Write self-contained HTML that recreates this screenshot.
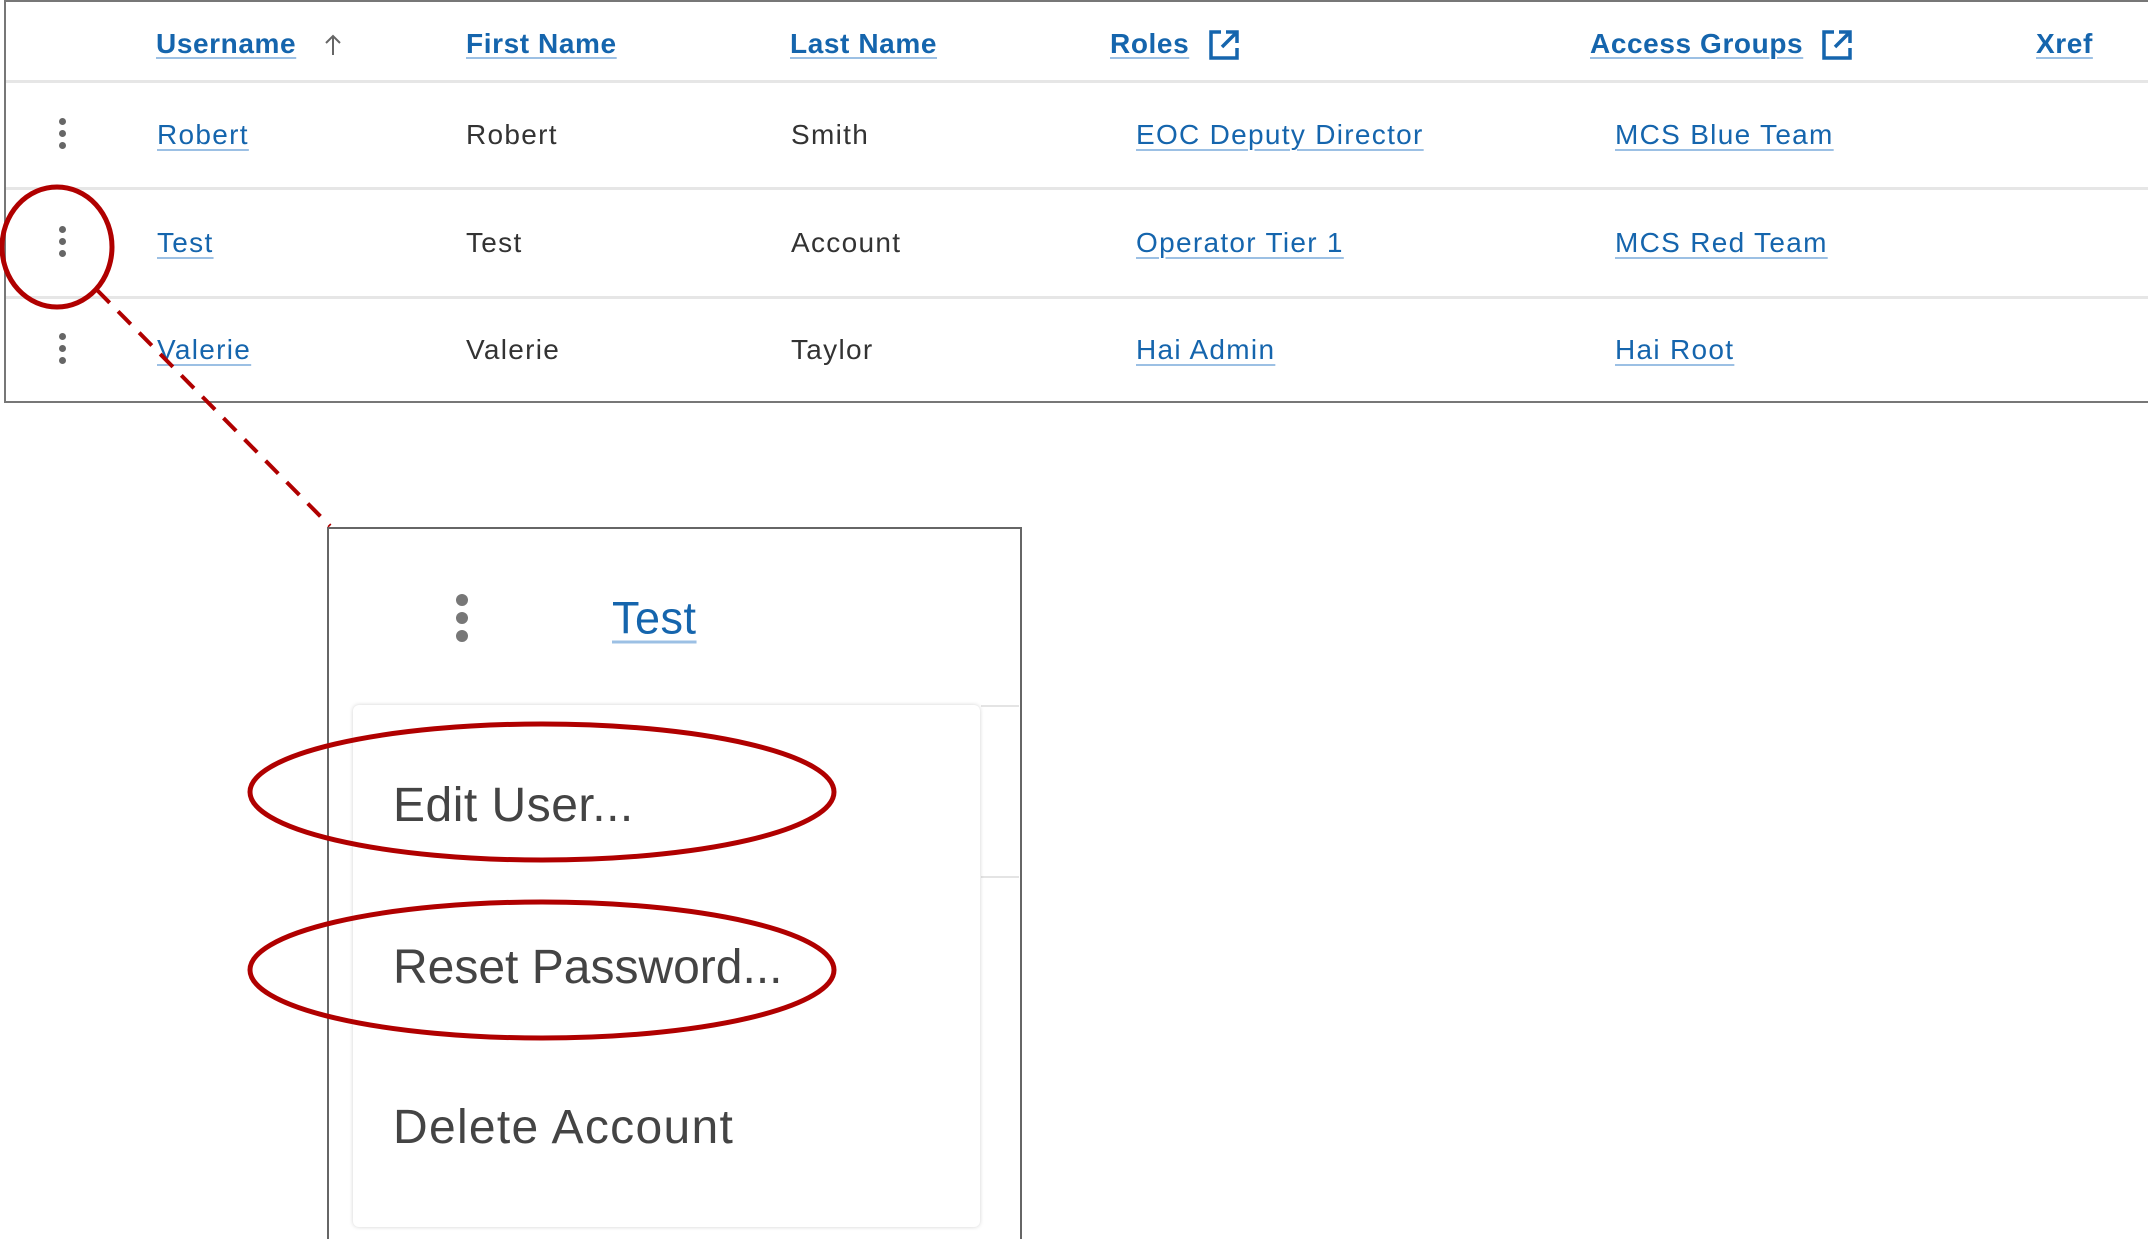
<!DOCTYPE html>
<html><head><meta charset="utf-8"><style>
body{margin:0;width:2148px;height:1231px;background:#fff;position:relative;overflow:hidden;font-family:"Liberation Sans",sans-serif;}
.a{position:absolute;white-space:nowrap;line-height:1;}
.h{font-weight:bold;color:#1565ad;font-size:28px;letter-spacing:.6px;text-decoration:underline;text-decoration-color:#9cc0e4;text-underline-offset:4px;text-decoration-thickness:2px;transform:translateY(-50%);}
.l{color:#1565ad;font-size:28px;letter-spacing:1.3px;text-decoration:underline;text-decoration-color:#9cc0e4;text-underline-offset:5px;text-decoration-thickness:2px;transform:translateY(-50%);}
.t{color:#333;font-size:28px;letter-spacing:1.3px;transform:translateY(-50%);}
.k{position:absolute;width:7px;}
.k i{display:block;width:7px;height:7px;border-radius:50%;background:#666;margin-bottom:5px;}
.m{color:#444;font-size:48px;transform:translateY(-50%);letter-spacing:.5px;}
</style></head><body>
<div style="position:absolute;left:4px;top:0;width:2142px;height:399px;border:2px solid #777;border-right:none;"></div>
<div style="position:absolute;left:6px;top:80px;width:2142px;height:3px;background:#e6e6e6"></div>
<div style="position:absolute;left:6px;top:187px;width:2142px;height:3px;background:#e6e6e6"></div>
<div style="position:absolute;left:6px;top:296px;width:2142px;height:3px;background:#e6e6e6"></div>

<div class="a h" style="left:156px;top:44px">Username</div>
<svg class="a" style="left:323px;top:33px" width="20" height="24" viewBox="0 0 20 24"><path d="M10 22V3M3 10l7-7 7 7" fill="none" stroke="#666" stroke-width="2"/></svg>
<div class="a h" style="left:466px;top:44px">First Name</div>
<div class="a h" style="left:790px;top:44px">Last Name</div>
<div class="a h" style="left:1110px;top:44px">Roles</div>
<svg class="a" style="left:1208px;top:29px" width="32" height="32" viewBox="0 0 32 32"><path d="M13 3H3v26h26V19M18 3h11v11M29 3L14 18" fill="none" stroke="#1565ad" stroke-width="3.5"/></svg>
<div class="a h" style="left:1590px;top:44px">Access Groups</div>
<svg class="a" style="left:1821px;top:29px" width="32" height="32" viewBox="0 0 32 32"><path d="M13 3H3v26h26V19M18 3h11v11M29 3L14 18" fill="none" stroke="#1565ad" stroke-width="3.5"/></svg>
<div class="a h" style="left:2036px;top:44px">Xref</div>

<div class="k" style="left:59px;top:118px"><i></i><i></i><i></i></div>
<div class="a l" style="left:157px;top:135px">Robert</div>
<div class="a t" style="left:466px;top:135px">Robert</div>
<div class="a t" style="left:791px;top:135px">Smith</div>
<div class="a l" style="left:1136px;top:135px">EOC Deputy Director</div>
<div class="a l" style="left:1615px;top:135px">MCS Blue Team</div>

<div class="k" style="left:59px;top:226px"><i></i><i></i><i></i></div>
<div class="a l" style="left:157px;top:243px">Test</div>
<div class="a t" style="left:466px;top:243px">Test</div>
<div class="a t" style="left:791px;top:243px">Account</div>
<div class="a l" style="left:1136px;top:243px">Operator Tier 1</div>
<div class="a l" style="left:1615px;top:243px">MCS Red Team</div>

<div class="k" style="left:59px;top:333px"><i></i><i></i><i></i></div>
<div class="a l" style="left:157px;top:350px">Valerie</div>
<div class="a t" style="left:466px;top:350px">Valerie</div>
<div class="a t" style="left:791px;top:350px">Taylor</div>
<div class="a l" style="left:1136px;top:350px">Hai Admin</div>
<div class="a l" style="left:1615px;top:350px">Hai Root</div>

<!-- popup -->
<div style="position:absolute;left:327px;top:527px;width:691px;height:710px;border:2px solid #666;border-bottom:none;background:#fff"></div>
<div style="position:absolute;left:981px;top:705px;width:38px;height:2px;background:#e4e4e4"></div>
<div style="position:absolute;left:981px;top:876px;width:38px;height:2px;background:#e4e4e4"></div>
<div class="k" style="left:456px;top:594px;width:12px"><i style="width:12px;height:12px;margin-bottom:6px;background:#777"></i><i style="width:12px;height:12px;margin-bottom:6px;background:#777"></i><i style="width:12px;height:12px;background:#777"></i></div>
<div class="a l" style="left:612px;top:618px;font-size:45px;letter-spacing:.5px;text-underline-offset:7px;text-decoration-thickness:3px">Test</div>
<div style="position:absolute;left:353px;top:705px;width:627px;height:522px;background:#fff;border-radius:6px;box-shadow:0 0 4px rgba(0,0,0,.18)"></div>
<div class="a m" style="left:393px;top:806px">Edit User...</div>
<div class="a m" style="left:393px;top:968px;letter-spacing:0">Reset Password...</div>
<div class="a m" style="left:393px;top:1128px;letter-spacing:1.3px">Delete Account</div>

<svg class="a" style="left:0;top:0" width="2148" height="1231">
<ellipse cx="57" cy="247" rx="55" ry="60" fill="none" stroke="#b00000" stroke-width="5"/>
<line x1="97" y1="290" x2="330" y2="526" stroke="#b00000" stroke-width="4" stroke-dasharray="18 12"/>
<ellipse cx="542" cy="792" rx="292" ry="68" fill="none" stroke="#b00000" stroke-width="5"/>
<ellipse cx="542" cy="970" rx="292" ry="68" fill="none" stroke="#b00000" stroke-width="5"/>
</svg>
</body></html>
